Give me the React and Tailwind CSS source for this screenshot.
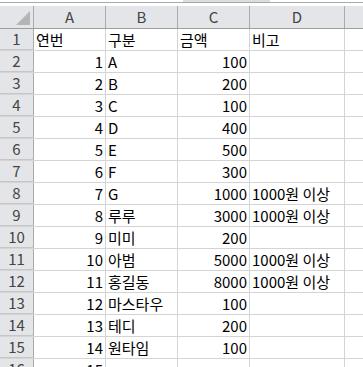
const rows = [
  ['연번', '구분', '금액', '비고'],
  [1, 'A', 100, ''],
  [2, 'B', 200, ''],
  [3, 'C', 100, ''],
  [4, 'D', 400, ''],
  [5, 'E', 500, ''],
  [6, 'F', 300, ''],
  [7, 'G', 1000, '1000원 이상'],
  [8, '루루', 3000, '1000원 이상'],
  [9, '미미', 200, ''],
  [10, '아범', 5000, '1000원 이상'],
  [11, '홍길동', 8000, '1000원 이상'],
  [12, '마스타우', 100, ''],
  [13, '테디', 200, ''],
  [14, '원타임', 100, ''],
  [15, '', '', ''],
]

const font = { fontFamily: '"Noto Sans CJK KR", "Liberation Sans", sans-serif' }

function Cell({ w, v }) {
  const num = typeof v === 'number'
  return (
    <div className={`${w} h-full shrink-0 border-r border-[#d4d4d4] flex items-center px-[2px] text-black ${num ? 'justify-end' : 'justify-start'}`}>
      <span className="leading-none whitespace-nowrap">{v}</span>
    </div>
  )
}

export default function App() {
  return (
    <div className="w-[363px] h-[367px] overflow-hidden bg-white text-[15px]" style={font}>
      {/* 위쪽 수식줄 경계 */}
      <div className="h-[6px] relative">
        <div className="h-[2px] flex">
          <div className="w-[183px]" />
          <div className="w-[87px] bg-[#dcdcdc]" />
        </div>
        <div className="h-px bg-[#a9a9a9]" />
      </div>

      {/* 열 머리글 */}
      <div className="h-[23px] flex bg-[#e3e5e8] border-b border-[#9e9e9e] text-[#444]">
        <div className="w-[34px] shrink-0 border-r border-[#ababab] relative">
          <div className="absolute right-[3px] bottom-[3px] w-0 h-0 border-l-[14px] border-l-transparent border-b-[14px] border-b-[#b5b5b5]" />
        </div>
        {['A', 'B', 'C'].map(c => (
          <div key={c} className="w-[72px] shrink-0 border-r border-[#ababab] flex items-center justify-center">{c}</div>
        ))}
        <div className="w-[95px] shrink-0 border-r border-[#ababab] flex items-center justify-center">D</div>
        <div className="flex-1" />
      </div>

      {rows.map((r, i) => (
        <div key={i} className="h-[22px] flex border-b border-[#d4d4d4]">
          <div className="w-[34px] shrink-0 h-full bg-[#e3e5e8] border-r border-[#ababab] flex items-center justify-center text-[#444] -mb-px border-b border-b-[#c6c6c6]">
            {i + 1}
          </div>
          <Cell w="w-[72px]" v={r[0]} />
          <Cell w="w-[72px]" v={r[1]} />
          <Cell w="w-[72px]" v={r[2]} />
          <Cell w="w-[95px]" v={r[3]} />
          <div className="flex-1" />
        </div>
      ))}
    </div>
  )
}
